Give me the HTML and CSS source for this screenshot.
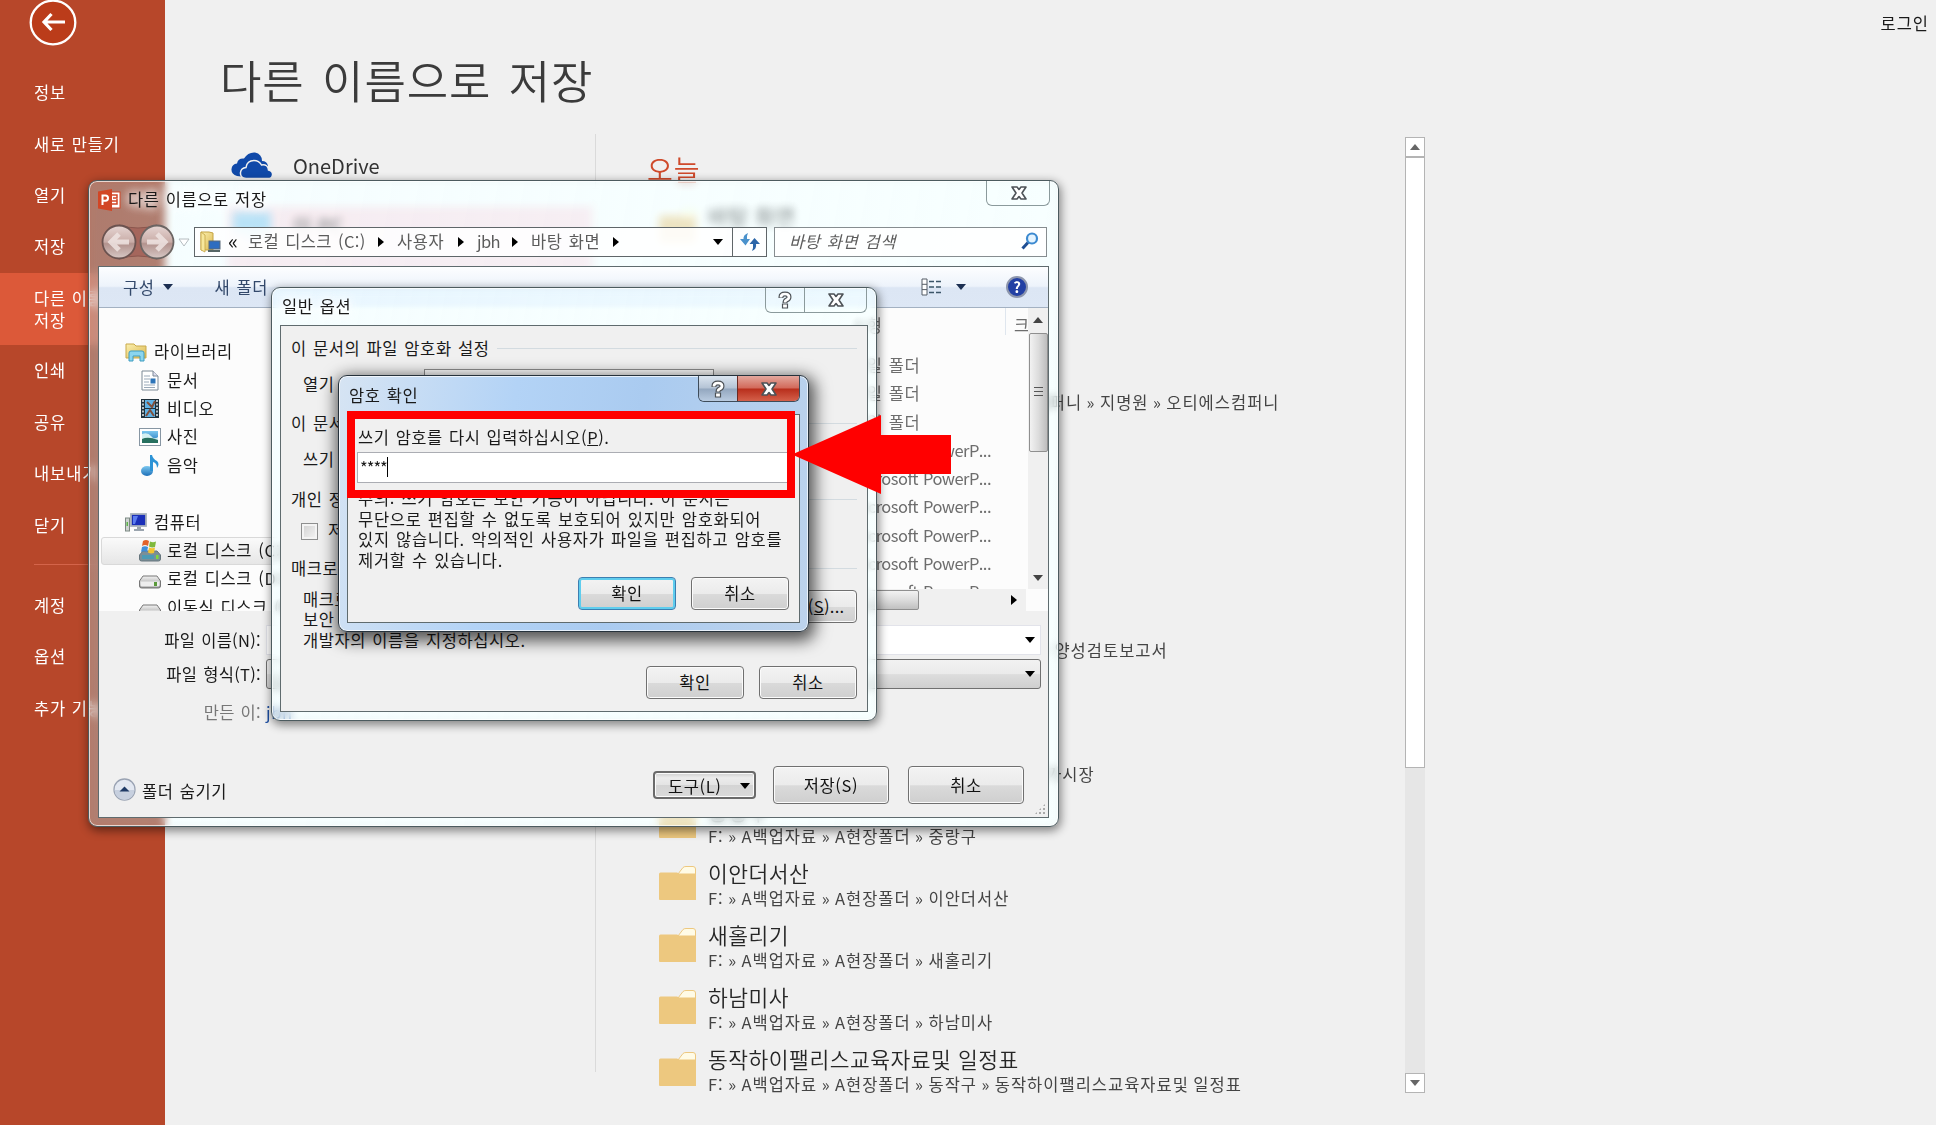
FILE: index.html
```html
<!DOCTYPE html>
<html lang="ko">
<head>
    <meta charset="UTF-8">
    <meta name="viewport" content="width=device-width, initial-scale=1.0">
    <title>다른 이름으로 저장</title>
    <link rel="stylesheet" href="styles.css">
</head>
<body>
    <!-- shared icons -->
    <svg class="defs" width="0" height="0">
      <defs>
        <linearGradient id="orb" x1="0" y1="0" x2="0" y2="1">
          <stop offset="0" stop-color="#e6d6d3"/><stop offset=".5" stop-color="#c9aca7"/><stop offset=".55" stop-color="#b3938e"/><stop offset="1" stop-color="#d8c9c6"/>
        </linearGradient>
        <linearGradient id="yellow" x1="0" y1="0" x2="1" y2="1">
          <stop offset="0" stop-color="#fbf0b0"/><stop offset="1" stop-color="#dcb850"/>
        </linearGradient>
        <linearGradient id="blue" x1="0" y1="0" x2="0" y2="1">
          <stop offset="0" stop-color="#7cc8f0"/><stop offset="1" stop-color="#1c6fb8"/>
        </linearGradient>
        <linearGradient id="metal" x1="0" y1="0" x2="0" y2="1">
          <stop offset="0" stop-color="#f4f4f4"/><stop offset="1" stop-color="#8e8e8e"/>
        </linearGradient>
      </defs>
      <symbol id="folder" viewBox="0 0 37 34">
        <path d="M19 8 L24 1.500 Q25 .5 27 .5 H34 Q36.500 .5 36.500 3 V10 H17Z" fill="#fffbe6" stroke="#edc87f"/>
        <path d="M0 8 Q0 6.500 1.500 6.500 H18 L20 7.500 H37 V34 H1 Q0 34 0 33Z" fill="#edc87f"/>
      </symbol>
      <symbol id="close" viewBox="0 0 18 16">
        <path d="M2 2 H7 L9 4.500 L11 2 H16 L12 8 L16 14 H11 L9 11.500 L7 14 H2 L6 8Z" fill="#fff" stroke="#4d5257" stroke-width="1.600" stroke-linejoin="round"/>
      </symbol>
      <symbol id="ask" viewBox="0 0 14 18">
        <path d="M3 7 V6 Q3 3 7 3 Q11 3 11 6 Q11 8 8.500 9 Q7 9.700 7 12" fill="none" stroke="#4d5257" stroke-width="5"/>
        <path d="M4.500 13 H9.500 V17 H4.500Z" fill="#fff" stroke="#4d5257" stroke-width="1.200"/>
        <path d="M3 6.500 V6 Q3 3 7 3 Q11 3 11 6 Q11 8 8.500 9 Q7 9.700 7 11.500" fill="none" stroke="#fff" stroke-width="2.700"/>
      </symbol>
      <symbol id="drive" viewBox="0 0 22 14">
        <path d="M4 1 H18 L21.500 6 V11 Q21.500 13 19.500 13 H2.500 Q.5 13 .5 11 V6Z" fill="url(#metal)" stroke="#777"/>
        <path d="M1.500 6.500 H20.500 V10.500 Q20 11.500 19 11.500 H3 Q1.500 11.500 1.500 10Z" fill="#ededed"/>
        <rect x="15" y="7" width="3" height="4" fill="#5a9a3a"/>
      </symbol>
    </svg>

    <div class="backstage">
      <nav class="sidebar">
        <svg class="back" width="48" height="48" viewBox="0 0 48 48">
          <ellipse cx="24" cy="22.500" rx="22.300" ry="21.800" fill="#bb3c1a" stroke="#fff" stroke-width="2.300"/>
          <path d="M36 22 H15 M22.500 14 L15 22 L22.500 30" fill="none" stroke="#fff" stroke-width="3.200"/>
        </svg>
        <a>정보</a>
        <a>새로 만들기</a>
        <a>열기</a>
        <a>저장</a>
        <a class="active">다른 이름으로<br>저장</a>
        <a>인쇄</a>
        <a>공유</a>
        <a>내보내기</a>
        <a>닫기</a>
        <hr>
        <a>계정</a>
        <a>옵션</a>
        <a>추가 기능</a>
      </nav>

      <main class="main">
        <header class="head">
          <span class="login">로그인</span>
          <h1>다른 이름으로 저장</h1>
        </header>
        <div class="columns">
          <section class="places">
            <div class="place">
              <svg width="42" height="27" viewBox="0 0 42 27">
                <path d="M6 24 Q0 22 .5 17 Q1 12 6 11.500 Q7 6 13 6.500 Q17 0 24 .5 Q31 2 31 9 Q36 9 37 14 L14 25Z" fill="#1049a9"/>
                <path d="M15 26.500 Q9 26 9.500 20.500 Q10 16 15 15.500 Q16 8.500 23 8.500 Q28 8.500 30.500 13 Q37 12 37.500 18 Q42 19 41.500 23 Q41 26.500 37 26.500Z" fill="#1049a9" stroke="#f0f0f0" stroke-width="1.500"/>
              </svg>
              <span>OneDrive</span>
            </div>
            <div class="place selected">
              <svg width="42" height="34" viewBox="0 0 42 34"><path d="M2 4 H40 V26 H2Z M14 28 H28 V32 H14Z" fill="#8fd0f5"/></svg>
              <span>이 PC</span>
            </div>
          </section>

          <section class="recent">
            <h2>오늘</h2>
            <div class="item"><svg class="folder"><use href="#folder"/></svg><div><b>바탕 화면</b></div></div>
            <div class="spacer"></div>
            <div class="item"><svg class="folder"><use href="#folder"/></svg><div><b>오티에스컴퍼니</b><p>F: » A백업자료 » A현장폴더 » 201. 오티에스컴퍼니 » 지명원 » 오티에스컴퍼니</p></div></div>
            <div class="item"></div>
            <div class="item"></div>
            <div class="item"></div>
            <div class="item"><svg class="folder"><use href="#folder"/></svg><div><b>토양성검토</b><p>F: » A백업자료 » A현장폴더 » 검토서류 » 토양- 양성검토보고서</p></div></div>
            <div class="item"></div>
            <div class="item"><svg class="folder"><use href="#folder"/></svg><div><b>중앙시장</b><p>F: » A백업자료 » A현장폴더 » 서울강동 중앙상가시장</p></div></div>
            <div class="item"><svg class="folder"><use href="#folder"/></svg><div><b>중랑구</b><p>F: » A백업자료 » A현장폴더 » 중랑구</p></div></div>
            <div class="item"><svg class="folder"><use href="#folder"/></svg><div><b>이안더서산</b><p>F: » A백업자료 » A현장폴더 » 이안더서산</p></div></div>
            <div class="item"><svg class="folder"><use href="#folder"/></svg><div><b>새홀리기</b><p>F: » A백업자료 » A현장폴더 » 새홀리기</p></div></div>
            <div class="item"><svg class="folder"><use href="#folder"/></svg><div><b>하남미사</b><p>F: » A백업자료 » A현장폴더 » 하남미사</p></div></div>
            <div class="item"><svg class="folder"><use href="#folder"/></svg><div><b>동작하이팰리스교육자료및 일정표</b><p>F: » A백업자료 » A현장폴더 » 동작구 » 동작하이팰리스교육자료및 일정표</p></div></div>
          </section>

          <div class="page-scroll">
            <div class="page-btn"><i class="tri up"></i></div>
            <div class="page-thumb"></div>
            <div class="page-btn last"><i class="tri down"></i></div>
          </div>
        </div>
      </main>
    </div>

    <!-- save as window -->
    <div class="window save">
      <div class="titlebar">
        <svg width="23" height="22" viewBox="0 0 23 22">
          <rect x="11" y="3" width="11" height="16" fill="#fff" stroke="#d24625"/>
          <path d="M14 6 H19 V9 H15 M14 12 H19 M14 15 H19 V10" fill="none" stroke="#d24625" stroke-width="1.500"/>
          <path d="M0 2.500 L14 0 V22 L0 19.500Z" fill="#d24625"/>
          <path d="M4.500 16 V6.500 H7.500 Q10 6.500 10 9 Q10 11.800 7.500 11.800 H5" fill="none" stroke="#fff" stroke-width="2"/>
        </svg>
        <span class="glow">다른 이름으로 저장</span>
        <div class="caps"><span class="cap wide"><svg width="18" height="16"><use href="#close"/></svg></span></div>
      </div>
      <div class="navbar">
        <svg class="orbs" width="76" height="38" viewBox="0 0 76 38">
          <path d="M19 2 Q38 8 57 2 V36 Q38 30 19 36Z" fill="#a5665c" stroke="#8a564d"/>
          <circle cx="19" cy="19" r="16.500" fill="url(#orb)" stroke="#6b5350" stroke-width="1.800"/>
          <circle cx="57" cy="19" r="16.500" fill="url(#orb)" stroke="#6b6563" stroke-width="1.800"/>
          <path d="M29 19 H12 M19 11 L11 19 L19 27" fill="none" stroke="#eee4e2" stroke-width="5" opacity=".85"/>
          <path d="M47 19 H64 M57 11 L65 19 L57 27" fill="none" stroke="#eee4e2" stroke-width="5" opacity=".85"/>
        </svg>
        <svg class="history" width="12" height="9" viewBox="0 0 12 9"><path d="M1 1 H11 L6 8Z" fill="#fff" stroke="#b4bcc0"/></svg>
        <div class="address">
          <svg width="21" height="22" viewBox="0 0 21 22">
            <path d="M1 1 H9 L13 2 V19 H1Z" fill="url(#yellow)" stroke="#c4a343"/>
            <path d="M1 1 L5 4 V21 L1 19Z" fill="#f7e79c" stroke="#c4a343" stroke-width=".8"/>
            <rect x="9" y="10" width="11" height="8" fill="#2f6dc0" stroke="#5b6b7a"/>
            <path d="M8 20 H20" stroke="#566" stroke-width="2"/>
          </svg>
          <span class="laquo">«</span>
          <span class="crumb c1">로컬 디스크 (C:)</span><i class="tri right"></i>
          <span class="crumb c2">사용자</span><i class="tri right"></i>
          <span class="crumb c3">jbh</span><i class="tri right"></i>
          <span class="crumb c4">바탕 화면</span><i class="tri right"></i>
          <i class="tri down drop"></i>
          <span class="refresh">
            <svg width="20" height="18" viewBox="0 0 20 18">
              <path d="M8 0 Q3 2 3.500 6 H0 L5.500 12.500 L10 6 H7 Q6.500 3 8 0Z" fill="#4a92cc"/>
              <path d="M12 18 Q17 16 16 11 H20 L14.500 5 L9.500 11 H13 Q13.500 15 12 18Z" fill="#2b66a8"/>
            </svg>
          </span>
        </div>
        <div class="search">
          <span>바탕 화면 검색</span>
          <svg width="18" height="18" viewBox="0 0 18 18">
            <path d="M1.500 16.500 L7 10.500" stroke="#1f4f94" stroke-width="3"/>
            <circle cx="11" cy="6.500" r="5" fill="#e4f4ff" stroke="#3c8ad0" stroke-width="2.200"/>
          </svg>
        </div>
      </div>

      <div class="client">
        <div class="toolbar">
          <span>구성</span><i class="tri down navy"></i>
          <span class="newfolder">새 폴더</span>
          <svg class="view" width="21" height="18" viewBox="0 0 21 18">
            <path d="M1 1 H6 V17 H1Z M1 6.300 H6 M1 11.600 H6" fill="#fff" stroke="#555d66"/>
            <path d="M8 3.500 H13 M15 3.500 H20 M8 9 H13 M15 9 H20 M8 14.500 H13 M15 14.500 H20" stroke="#3b5568" stroke-width="1.300"/>
          </svg>
          <i class="tri down navy"></i>
          <span class="help">?</span>
        </div>

        <div class="browser">
          <div class="tree">
            <div class="node top">
              <svg width="22" height="20" viewBox="0 0 22 20">
                <path d="M1 2 H9 L11 4 H21 V16 H1Z" fill="url(#yellow)" stroke="#c9a94a"/>
                <path d="M4 19 V11 Q4 9 6 9 H17 Q19 9 19 11 V19 H15 V14 H8 V19Z" fill="#8bd5ee" stroke="#3f9cc0"/>
              </svg>
              <span>라이브러리</span>
            </div>
            <div class="node">
              <svg width="22" height="21" viewBox="0 0 22 21">
                <path d="M3 1 H14 L19 6 V20 H3Z" fill="#fff" stroke="#7c8a96"/>
                <path d="M14 1 V6 H19" fill="#dde" stroke="#7c8a96"/>
                <path d="M5 6 H11 M5 9 H11 M5 12 H10 M5 15 H16 M5 17.500 H16" stroke="#9aa9b8"/>
                <rect x="11.500" y="8.500" width="5" height="5" fill="#2d74b8"/>
              </svg>
              <span>문서</span>
            </div>
            <div class="node">
              <svg width="22" height="21" viewBox="0 0 22 21">
                <rect x="2" y="1" width="18" height="19" fill="#20303a"/>
                <rect x="6" y="2" width="10" height="8" fill="#5fb2e6"/><rect x="6" y="11" width="10" height="8" fill="#5fb2e6"/>
                <path d="M8 4 L13 9 L16 3 M7 18 L11 12 L15 18" stroke="#80503c" stroke-width="2" fill="none"/>
                <path d="M4 2 V19 M18 2 V19" stroke="#e8eef2" stroke-width="1.500" stroke-dasharray="2 1.500"/>
              </svg>
              <span>비디오</span>
            </div>
            <div class="node">
              <svg width="22" height="18" viewBox="0 0 22 18">
                <rect x=".5" y=".5" width="21" height="17" fill="#fff" stroke="#8796a3"/>
                <rect x="3" y="3" width="16" height="12" fill="url(#blue)"/>
                <path d="M3 6 Q9 4 12 8 T19 9 V7 V12 H3Z" fill="#d3f0f2"/><path d="M3 11 Q9 8 19 12 V15 H3Z" fill="#27705f"/>
              </svg>
              <span>사진</span>
            </div>
            <div class="node">
              <svg width="22" height="23" viewBox="0 0 22 23">
                <ellipse cx="8" cy="17" rx="6" ry="5" fill="url(#blue)"/>
                <path d="M11 17 V1 H13 Q14 5 18 7 Q21 10 18 14 Q18 9 14 8 V17Z" fill="#2c93d6"/>
              </svg>
              <span>음악</span>
            </div>
            <div class="node"></div>
            <div class="node top">
              <svg width="22" height="20" viewBox="0 0 22 20">
                <rect x=".5" y="5" width="4" height="13" fill="#cfd4d2" stroke="#7d8a84"/>
                <rect x="1.500" y="9" width="1.500" height="4" fill="#5fb54a"/>
                <rect x="6" y="1" width="15" height="12" fill="#1a2fb8" stroke="#a7b0bb" stroke-width="1.800"/>
                <path d="M8 3 H13 L10 11 H8Z" fill="#5b7cf0"/>
                <path d="M12 14 H16 V16 H19 V18 H9 V16 H12Z" fill="#9aa4ae"/>
              </svg>
              <span>컴퓨터</span>
            </div>
            <div class="node current">
              <svg width="22" height="23" viewBox="0 0 22 23">
                <path d="M4 12 H18 L21.500 16 V20 Q21.500 22 19.500 22 H2.500 Q.5 22 .5 20 V16Z" fill="#7a8f98" stroke="#66757d"/>
                <rect x="3" y="16" width="12" height="4" fill="#4c9ab4"/><rect x="17" y="16" width="2.500" height="4" fill="#7dda3c"/>
                <path d="M4 2 Q7 0 10 2 L9 7 Q6 5 3 7Z" fill="#e2622b"/><path d="M11 2.500 Q14 4 17 2.500 L16 8 Q13 9 10 7.500Z" fill="#7fb93c"/>
                <path d="M3 8 Q6 6.500 9 8 L8 13 Q5 11.500 2 13Z" fill="#3f8edb"/><path d="M10 8.500 Q13 10 16 8.500 L15 14 Q12 15 9 13.500Z" fill="#f3c331"/>
              </svg>
              <span>로컬 디스크 (C:)</span>
            </div>
            <div class="node"><svg class="low" width="22" height="14"><use href="#drive"/></svg><span>로컬 디스크 (D:)</span></div>
            <div class="node"><svg class="low" width="22" height="14"><use href="#drive"/></svg><span>이동식 디스크 (E:)</span></div>
          </div>

          <div class="files">
            <div class="files-view">
              <div class="files-list">
                <div class="cols"><span>유형</span><span class="size">크기</span></div>
                <p>파일 폴더</p>
                <p>파일 폴더</p>
                <p>파일 폴더</p>
                <p class="en">Microsoft PowerP...</p>
                <p class="en">Microsoft PowerP...</p>
                <p class="en">Microsoft PowerP...</p>
                <p class="en">Microsoft PowerP...</p>
                <p class="en">Microsoft PowerP...</p>
                <p class="en">Microsoft PowerP...</p>
              </div>
              <div class="vscroll">
                <i class="tri up"></i>
                <div class="vthumb"><span></span></div>
                <i class="tri down"></i>
              </div>
            </div>
            <div class="hscroll"><div class="hthumb"></div><i class="tri right"></i></div>
          </div>
        </div>

        <div class="form">
          <div class="field"><label>파일 이름(N):</label><div class="combo"><i class="tri down"></i></div></div>
          <div class="field type"><label>파일 형식(T):</label><div class="combo gray"><i class="tri down"></i></div></div>
          <div class="field author"><label>만든 이:</label><span>jbh</span></div>
        </div>

        <div class="footer">
          <svg class="fold" width="23" height="23" viewBox="0 0 23 23">
            <circle cx="11.500" cy="11.500" r="10.500" fill="#e3e8f1" stroke="#9aa3b3" stroke-width="1.300"/>
            <path d="M1.500 12 H21.500 A10 10 0 0 1 1.500 12Z" fill="#c7d0df"/>
            <path d="M6.500 13.500 L11.500 8.500 L16.500 13.500Z" fill="#1f3a66"/>
          </svg>
          <span class="hide">폴더 숨기기</span>
          <button class="tools">도구(L)<i class="tri down"></i></button>
          <button class="big">저장(S)</button>
          <button class="big last">취소</button>
        </div>
        <div class="grip"></div>
      </div>
    </div>

    <!-- general options window -->
    <div class="window options">
      <div class="titlebar">
        <span class="glow">일반 옵션</span>
        <div class="caps"><span class="cap"><svg width="14" height="18"><use href="#ask"/></svg></span><span class="cap wide"><svg width="18" height="16"><use href="#close"/></svg></span></div>
      </div>
      <div class="client">
        <div class="legend">이 문서의 파일 암호화 설정</div>
        <div class="row pw"><span>열기 암호(O):</span><div class="input"></div></div>
        <div class="legend l2">이 문서의 파일 공유 설정</div>
        <div class="row pw"><span>쓰기 암호(M):</span><div class="input"></div></div>
        <div class="legend l3">개인 정보 옵션</div>
        <div class="row check"><i class="box"></i><span>저장할 때 자동으로 개인 정보 제거</span></div>
        <div class="legend l4">매크로 보안</div>
        <div class="macro">
          <p>매크로 바이러스가 있을 수 있는 파일을 열 때의<br>보안 수준을 조정하고 신뢰할 수 있는 매크로<br>개발자의 이름을 지정하십시오.</p>
          <button>매크로 보안(<u>S</u>)...</button>
        </div>
        <div class="actions"><button>확인</button><button>취소</button></div>
      </div>
    </div>

    <!-- confirm password window -->
    <div class="window confirm">
      <div class="titlebar">
        <span>암호 확인</span>
        <div class="caps"><span class="cap"><svg width="14" height="18"><use href="#ask"/></svg></span><span class="cap wide red"><svg width="18" height="16"><use href="#close"/></svg></span></div>
      </div>
      <div class="client">
        <label>쓰기 암호를 다시 입력하십시오(<u>P</u>).</label>
        <div class="input"><span>****</span></div>
        <p>주의: 쓰기 암호는 보안 기능이 아닙니다. 이 문서는<br>무단으로 편집할 수 없도록 보호되어 있지만 암호화되어<br>있지 않습니다. 악의적인 사용자가 파일을 편집하고 암호를<br>제거할 수 있습니다.</p>
        <div class="actions"><button class="default">확인</button><button>취소</button></div>
      </div>
    </div>

    <!-- highlight -->
    <div class="mark"></div>
    <svg class="arrow" width="159" height="80" viewBox="0 0 159 80"><path d="M0 39.500 L89 0 V20 H159 V59 H89 V79Z" fill="#f00"/></svg>
</body>
</html>
```
FILE: styles.css
```css
*{
  padding: 0;
  margin: 0;
  box-sizing: border-box;
}

body{
  position: relative;
  width: 1936px;
  height: 1125px;
  overflow: hidden;
  background-color: #f0f0f0;
  font-family: "Noto Sans CJK KR", "Noto Sans", sans-serif;
  font-size: 16.5px;
  letter-spacing: 0.6px;
  word-spacing: 1px;
  line-height: 20px;
  color: #1a1a1a;
  white-space: nowrap;
}

svg{
  display: block;
  flex-shrink: 0;
}

.defs{
  position: absolute;
}

/*small triangles*/
.tri{
  flex-shrink: 0;
  width: 0;
  height: 0;
  border: 5px solid transparent;
}

.tri.down{
  border-top: 6px solid #000;
  border-bottom: 0;
}

.tri.up{
  border-bottom: 6px solid #444;
  border-top: 0;
}

.tri.right{
  border-left: 6px solid #000;
  border-right: 0;
}

.tri.navy{
  border-top-color: #1c2f52;
}

/*backstage*/
.backstage{
  display: flex;
  height: 1125px;
}

.sidebar{
  width: 165px;
  background-color: #b7472a;
  color: #fff;
  letter-spacing: 0.9px;
  word-spacing: 0;
}

.back{
  margin: 0 0 19px 29px;
}

.sidebar a{
  display: flex;
  align-items: center;
  height: 51.4px;
  padding: 0 0 1px 34px;
}

.sidebar .active{
  display: block;
  height: 72.6px;
  padding-top: 14px;
  line-height: 22px;
  background-color: #dc5939;
}

.sidebar hr{
  border: 0;
  height: 1px;
  margin: 13px 0 15px 34px;
  background-color: #d4644a;
}

.main{
  flex: 1;
}

.head{
  height: 134px;
  padding: 13px 7px 0 55px;
}

.login{
  display: block;
  text-align: right;
  letter-spacing: 1px;
}

.head h1{
  margin-top: 17px;
  font-size: 45px;
  font-weight: 350;
  line-height: 60px;
  letter-spacing: 0.9px;
  word-spacing: 4px;
  color: #3b3b3b;
}

.columns{
  display: flex;
}

.places{
  width: 431px;
  height: 938px;
  padding: 2px 3px 0 62px;
  border-right: 1px solid #dadada;
}

.place{
  display: flex;
  align-items: center;
  gap: 20px;
  height: 60px;
  padding-left: 4px;
  font-size: 20px;
  letter-spacing: 0;
  color: #333;
}

.place > svg{
  margin-top: -2px;
}

.place.selected{
  height: 112px;
  margin-top: 10px;
  padding-bottom: 72px;
  background-color: #fbd6de;
}

.recent{
  width: 809px;
  padding-left: 51px;
}

.recent h2{
  height: 64px;
  padding-top: 7px;
  font-size: 28px;
  font-weight: 350;
  line-height: 56px;
  letter-spacing: 1px;
  color: #cf4a2b;
}

.spacer{
  height: 99px;
}

.item{
  display: flex;
  gap: 12px;
  height: 62px;
  padding: 5px 0 0 12px;
}

.item .folder{
  width: 37px;
  height: 34px;
  margin-top: 6px;
}

.item b{
  display: block;
  font-size: 21.5px;
  font-weight: 350;
  line-height: 26px;
  letter-spacing: 0.5px;
  word-spacing: 0;
  color: #262626;
}

.item p{
  line-height: 24px;
  letter-spacing: 1px;
  word-spacing: -1.2px;
  color: #444;
}

.page-scroll{
  width: 20px;
  height: 956px;
  margin-top: 3px;
  display: flex;
  flex-direction: column;
  background-color: #e6e6e6;
}

.page-btn{
  height: 20px;
  display: flex;
  align-items: center;
  justify-content: center;
  border: 1px solid #b4b4b4;
  background-color: #fff;
}

.page-btn .tri.up{
  border-bottom-color: #666;
}

.page-btn.last{
  margin-top: auto;
}

.page-btn .tri.down{
  border-top-color: #666;
}

.page-thumb{
  height: 611px;
  border: 1px solid #b4b4b4;
  background-color: #fff;
}

/*aero windows*/
.window{
  position: absolute;
  display: flex;
  flex-direction: column;
  padding: 0 8px 8px;
  border: 1px solid #4c5b5f;
  border-radius: 9px;
  background: linear-gradient(100deg, rgba(215, 250, 255, 0.24), rgba(235, 255, 255, 0.4));
  backdrop-filter: blur(4px) saturate(0.65) brightness(1.07);
  box-shadow: inset 0 0 0 1px rgba(255, 255, 255, 0.7), 1px 3px 10px 1px rgba(0, 0, 0, 0.45);
}

.titlebar{
  display: flex;
  flex-shrink: 0;
}

.glow{
  text-shadow: 0 0 8px #fff, 0 0 8px #fff, 0 0 12px #fff;
}

.caps{
  display: flex;
  height: 25px;
  margin-left: auto;
  border: 1px solid #8b9a9c;
  border-top: 0;
  border-radius: 0 0 6px 6px;
  overflow: hidden;
}

.cap{
  display: flex;
  align-items: center;
  justify-content: center;
  width: 38px;
}

.cap.wide{
  width: 62px;
}

.cap + .cap{
  border-left: 1px solid #8b9a9c;
}

.client{
  flex: 1;
  min-height: 0;
  border: 1px solid #5f6b6e;
  background-color: #f0f0f0;
}

button{
  display: flex;
  align-items: center;
  justify-content: center;
  width: 98px;
  height: 33px;
  padding-bottom: 1px;
  border: 1px solid #707070;
  border-radius: 4px;
  background: linear-gradient(#f3f3f3, #ebebeb 50%, #dadada 52%, #cfcfcf);
  box-shadow: inset 0 0 0 1px #fbfbfb;
  font: inherit;
  letter-spacing: inherit;
  word-spacing: inherit;
  color: #111;
}

.actions{
  display: flex;
  justify-content: flex-end;
  gap: 15px;
}

/*save as*/
.save{
  left: 88px;
  top: 180px;
  width: 971px;
  height: 647px;
  padding: 0 9px 8px;
}

.save .titlebar{
  height: 41px;
  gap: 7px;
}

.save .titlebar > svg{
  margin-top: 8px;
}

.save .glow{
  margin-top: 8px;
}

.save .caps{
  margin-right: -1px;
}

.save .cap svg{
  margin-left: 2px;
}

.navbar{
  display: flex;
  align-items: center;
  height: 39px;
  margin-bottom: 5px;
}

.orbs{
  margin-left: 2px;
}

.history{
  margin: 2px 4px 0 2px;
}

.address, .search{
  display: flex;
  align-items: center;
  height: 30px;
  border: 1px solid #868d90;
  background-color: rgba(255, 255, 255, 0.85);
  color: #5c5c5c;
}

.address{
  width: 573px;
  padding-left: 5px;
  border-color: #5f6669;
}

.laquo{
  width: 20px;
  margin-left: 7px;
  padding-bottom: 3px;
  font-size: 21px;
  color: #111;
}

.crumb{
  flex-shrink: 0;
  padding-bottom: 2px;
}

.c1{
  width: 130px;
  letter-spacing: 0.4px;
}

.c2, .c3, .c4{
  margin-left: 13px;
}

.c2{
  width: 61px;
}

.c3{
  width: 35px;
  letter-spacing: -0.6px;
}

.c4{
  width: 82px;
}

.address .drop{
  margin-left: auto;
  margin-right: 9px;
}

.refresh{
  display: flex;
  align-items: center;
  justify-content: center;
  width: 34px;
  height: 100%;
  border-left: 1px solid #5f6669;
}

.search{
  width: 273px;
  margin-left: 7px;
  padding: 0 7px 1px 14px;
  justify-content: space-between;
  font-style: italic;
}

.save .client{
  display: flex;
  flex-direction: column;
  position: relative;
}

.toolbar{
  display: flex;
  flex-shrink: 0;
  align-items: center;
  height: 41px;
  padding: 0 20px 1px 24px;
  border-bottom: 1px solid #a3b1c2;
  background: linear-gradient(#fdfeff, #edf3fb 48%, #dce6f4 52%, #dde7f5);
  color: #33496b;
}

.toolbar .tri{
  margin-left: 8px;
}

.newfolder{
  margin-left: 42px;
}

.view{
  margin-left: auto;
  margin-right: 6px;
}

.help{
  width: 22px;
  height: 22px;
  margin-left: 40px;
  border: 2px solid #8d96ad;
  border-radius: 50%;
  background-color: #2340a4;
  color: #fff;
  font-size: 15px;
  font-weight: 700;
  line-height: 17px;
  letter-spacing: 0;
  text-align: center;
}

.browser{
  display: flex;
  height: 303px;
  flex-shrink: 0;
  overflow: hidden;
  background-color: #fcfcfc;
}

.tree{
  width: 740px;
  padding: 30px 0 0 2px;
}

.node{
  display: flex;
  align-items: center;
  gap: 6px;
  height: 28.4px;
  padding-left: 38px;
}

.node span{
  padding-bottom: 2px;
}

.node.top{
  padding-left: 24px;
  gap: 7px;
}

.node.current{
  border: 1px solid #d9d9d9;
  border-radius: 3px;
  padding-left: 37px;
  background: linear-gradient(#fafafa, #e6e6e6);
}

.low{
  margin-top: 6px;
}

.files{
  flex: 1;
}

.files-view{
  display: flex;
  height: 281px;
  overflow: hidden;
}

.files-list{
  width: 190px;
  padding-left: 13px;
  color: #6d6d6d;
}

.files-list p{
  height: 28.3px;
  line-height: 28.3px;
}

.files-list .en{
  letter-spacing: -0.55px;
}

.cols{
  display: flex;
  height: 27px;
  margin-bottom: 16px;
  padding-top: 7px;
}

.cols .size{
  width: 23px;
  height: 27px;
  margin: -7px 0 0 auto;
  padding: 7px 0 0 8px;
  border-left: 1px solid #dfe6ee;
  overflow: hidden;
}

.vscroll{
  display: flex;
  flex-direction: column;
  align-items: center;
  width: 20px;
  padding: 9px 0 8px;
  background-color: #f0f0f0;
}

.vscroll .tri.down{
  border-top-color: #444;
}

.vthumb{
  display: flex;
  align-items: center;
  justify-content: center;
  width: 19px;
  height: 119px;
  margin: 10px 0 auto;
  border: 1px solid #8f8f8f;
  border-radius: 2px;
  background: linear-gradient(90deg, #f2f2f2, #dcdcdc 50%, #bdbdbd);
}

.vthumb span{
  width: 9px;
  height: 11px;
  background: repeating-linear-gradient(#555 0 1.5px, transparent 1.5px 4px);
}

.hscroll{
  display: flex;
  align-items: center;
  justify-content: space-between;
  width: 188px;
  height: 22px;
  padding-right: 9px;
  background-color: #f0f0f0;
}

.hthumb{
  width: 81px;
  height: 20px;
  border: 1px solid #8f8f8f;
  border-radius: 2px;
  background: linear-gradient(#f2f2f2, #dcdcdc 50%, #c0c0c0);
}

.form{
  padding: 14px 7px 0 0;
}

.field{
  display: flex;
  align-items: center;
  height: 30px;
}

.field label{
  width: 162px;
  padding-bottom: 1px;
  text-align: right;
  flex-shrink: 0;
  letter-spacing: 0.3px;
}

.combo{
  display: flex;
  flex: 1;
  align-items: center;
  justify-content: flex-end;
  height: 30px;
  margin-left: 5px;
  padding-right: 5px;
  border: 1px solid #e2e3ea;
  background-color: #fff;
}

.field.type{
  margin-top: 4px;
}

.combo.gray{
  border: 1px solid #707070;
  border-radius: 3px;
  background: linear-gradient(#f2f2f2, #ebebeb 50%, #dddddd 52%, #cfcfcf);
}

.field.author{
  margin-top: 8px;
  color: #777;
}

.author span{
  margin-left: 5px;
  color: #1d4fa3;
}

.footer{
  display: flex;
  align-items: center;
  height: 40px;
  margin-top: auto;
  margin-bottom: 12px;
  padding: 0 24px 0 14px;
}

.fold{
  margin-top: 9px;
}

.hide{
  margin: 11px auto 0 6px;
}

.tools{
  width: 103px;
  height: 28px;
  padding: 1px 4px 0 13px;
  margin-right: -1px;
  justify-content: space-between;
  border: 2px solid #6a6a6a;
  background: linear-gradient(#cfcfcf, #ececec 20%, #e4e4e4 50%, #d4d4d4 52%, #dadada);
}

.big{
  width: 116px;
  height: 38px;
  margin-left: 18px;
}

.big.last{
  margin-left: 19px;
}

.grip{
  position: absolute;
  right: 2px;
  bottom: 2px;
  width: 12px;
  height: 12px;
  background: radial-gradient(circle, #aaa 1px, transparent 1.3px) 0 0 / 4px 4px;
  clip-path: polygon(100% 0, 100% 100%, 0 100%);
}

/*general options*/
.options{
  left: 271px;
  top: 287px;
  width: 606px;
  height: 434px;
}

.options .titlebar{
  height: 37px;
}

.options .glow{
  margin: 8px 0 0 2px;
}

.options .caps{
  margin-right: 1px;
}

.options .client{
  padding: 12px 10px 0 10px;
}

.legend{
  display: flex;
  align-items: center;
  gap: 8px;
  height: 20px;
}

.legend::after{
  content: "";
  flex: 1;
  height: 1px;
  background-color: #d3dbe0;
}

.row{
  display: flex;
  align-items: center;
  padding-left: 12px;
}

.pw{
  height: 33px;
  margin-top: 10px;
}

.pw span{
  width: 121px;
  padding-bottom: 2px;
}

.input{
  width: 290px;
  height: 32px;
  border: 1px solid #abadb3;
  background-color: #fff;
}

.pw .input{
  border-color: #8f8f8f;
}

.l2{
  margin-top: 12px;
}

.l3{
  margin-top: 13px;
}

.check{
  height: 20px;
  margin-top: 12px;
  padding-left: 10px;
}

.check span{
  padding-bottom: 2px;
}

.box{
  width: 17px;
  height: 17px;
  margin-right: 10px;
  border: 1px solid #8e8f8f;
  background: linear-gradient(135deg, #cfcfcf, #f6f6f6);
  box-shadow: inset 0 0 0 2px #f4f4f4;
}

.l4{
  margin-top: 17px;
}

.macro{
  display: flex;
  justify-content: space-between;
  padding: 11px 0 0 12px;
}

.macro p{
  line-height: 20.3px;
}

.macro button{
  width: 150px;
  margin-top: 1px;
  padding-left: 5px;
  letter-spacing: 0.3px;
}

.options .actions{
  margin-top: 16px;
}

/*confirm password*/
.confirm{
  left: 338px;
  top: 375px;
  width: 471px;
  height: 257px;
  border-color: #26323c;
  background: linear-gradient(100deg, #d6e4f3, #b3d3f6 35%, #aacbf0 60%, #bdd3ec);
  backdrop-filter: none;
  box-shadow: inset 0 0 0 1px rgba(255, 255, 255, 0.7), 2px 5px 16px 4px rgba(0, 0, 0, 0.65);
}

.confirm .titlebar{
  height: 38px;
}

.confirm .titlebar > span{
  margin: 9px 0 0 2px;
}

.confirm .caps{
  border-color: #3e4c5a;
  height: 26px;
}

.confirm .cap{
  background: linear-gradient(#dbe5f0, #b4c3d5 48%, #93a7bf 52%, #b9cbe0);
}

.confirm .red{
  border-color: #6b2a22;
  background: linear-gradient(#e3a79d, #d2695a 48%, #b82e1c 52%, #d4604a);
}

.confirm .client{
  padding: 11px 10px 0 9px;
}

.confirm label{
  display: block;
  padding: 1px 0 0 1px;
  letter-spacing: 0.55px;
}

.confirm .input{
  width: 433px;
  height: 31px;
  margin-top: 5px;
  padding: 4px 0 0 2px;
}

.confirm .input span{
  display: inline-block;
  height: 20px;
  border-right: 1.5px solid #000;
  line-height: 20px;
  letter-spacing: -1px;
}

.confirm p{
  padding: 5px 0 0 1px;
  line-height: 20.5px;
  letter-spacing: 0.7px;
}

.confirm .actions{
  margin-top: 7px;
}

.default{
  border-color: #3c7fb1;
  box-shadow: inset 0 0 0 2px #5fcdee;
}

/*red marker and arrow*/
.mark{
  position: absolute;
  left: 347px;
  top: 411px;
  width: 448px;
  height: 87px;
  border: 8px solid #f00;
}

.arrow{
  position: absolute;
  left: 792px;
  top: 415px;
}
```
